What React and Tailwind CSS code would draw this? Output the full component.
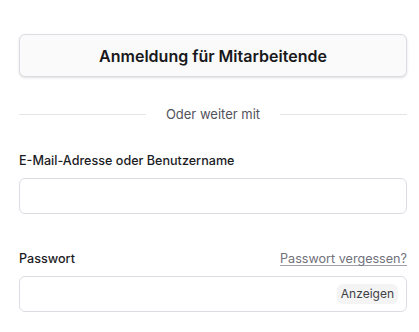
export default function App() {
  return (
    <div className="min-h-screen bg-white pt-[34px] pl-[19px]" style={{ fontFamily: "Inter, 'Liberation Sans', sans-serif" }}>
      <div className="w-[388px]">
        {/* Mitarbeiter-Login */}
        <button className="w-full h-[43px] rounded-md border border-[#dcdce3] bg-[#fafafa] shadow-sm text-[16px] font-semibold text-[#18181b]">
          Anmeldung für Mitarbeitende
        </button>

        {/* Trenner */}
        <div className="flex items-center gap-[20px] mt-[28px]">
          <div className="flex-1 h-px bg-[#e4e4e7]" />
          <span className="text-[13px] text-[#52525b]">Oder weiter mit</span>
          <div className="flex-1 h-px bg-[#e4e4e7]" />
        </div>

        {/* E-Mail */}
        <label className="block mt-[27px] text-[12.6px] font-medium text-[#1c1c1f]">
          E-Mail-Adresse oder Benutzername
        </label>
        <input className="mt-[8px] w-full h-[36px] rounded-md border border-[#dcdce3] bg-white px-3 text-sm outline-none" />

        {/* Passwort */}
        <div className="flex items-end justify-between mt-[36px]">
          <span className="text-[12.6px] font-medium text-[#1c1c1f]">Passwort</span>
          <a className="text-[12.6px] text-[#71717a] underline decoration-[#a1a1aa] underline-offset-2">Passwort vergessen?</a>
        </div>
        <div className="mt-[7px] flex items-center h-[36px] rounded-md border border-[#dcdce3] bg-white pr-[8px]">
          <input className="flex-1 h-full px-3 text-sm outline-none bg-transparent" type="password" />
          <button className="h-[20px] px-[4px] rounded-md bg-[#f4f4f5] text-[12px] text-[#3f3f46]">Anzeigen</button>
        </div>
      </div>
    </div>
  )
}
